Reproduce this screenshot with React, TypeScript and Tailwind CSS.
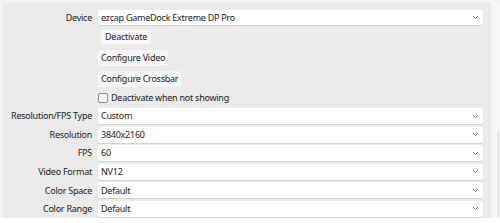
import React from 'react';

const font = { fontFamily: '"Noto Sans", "Open Sans", sans-serif' };

function Chevron() {
  return (
    <svg width="7" height="5" viewBox="0 0 7 5" className="shrink-0">
      <polyline points="1,1 3.5,3.5 6,1" fill="none" stroke="#7a7a7a" strokeWidth="1" />
    </svg>
  );
}

function Select({ value, h = 'h-[16px]' }: { value: string; h?: string }) {
  return (
    <div
      className={`${h} flex items-center justify-between bg-white rounded-[2px] pl-[3px] pr-[4px] shadow-[0_1px_0_#d2d2d2]`}
    >
      <span>{value}</span>
      <Chevron />
    </div>
  );
}

const selects: [string, string][] = [
  ['Resolution/FPS Type', 'Custom'],
  ['Resolution', '3840x2160'],
  ['FPS', '60'],
  ['Video Format', 'NV12'],
  ['Color Space', 'Default'],
  ['Color Range', 'Default'],
];

export default function App() {
  return (
    <div
      className="w-[500px] h-[223px] bg-[#f4f4f4] overflow-hidden text-[9px] tracking-[-0.25px] text-[#1b1b1b]"
      style={font}
    >
      <div className="flex h-[218px] pt-[3px]">
        <div className="ml-[3px] w-[486px] bg-[#ebebeb] pr-[6px] pt-[7px]">
          {/* Device */}
          <div className="grid grid-cols-[89px_1fr] gap-x-[6px] items-center h-[15px]">
            <span className="text-right">Device</span>
            <Select value="ezcap GameDock Extreme DP Pro" h="h-[15px]" />
          </div>

          {/* Buttons */}
          <div className="ml-[95px] flex flex-col items-start">
            <div className="mt-[5px] ml-[3px] h-[14px] px-[4px] flex items-center bg-[#f9f9f9] rounded-[2px]">
              Deactivate
            </div>
            <div className="mt-[6px] h-[16px] px-[3px] flex items-center bg-[#f6f6f6] rounded-[2px]">
              Configure Video
            </div>
            <div className="mt-[5px] h-[16px] px-[3px] flex items-center bg-[#f6f6f6] rounded-[2px]">
              Configure Crossbar
            </div>
            <label className="mt-[3px] h-[16px] flex items-center gap-[3px]">
              <span className="w-[10px] h-[10px] border border-[#8a8a8a] rounded-[2px] bg-[#f7f7f7]" />
              <span>Deactivate when not showing</span>
            </label>
          </div>

          {/* Selects */}
          <div className="mt-[2px] flex flex-col gap-[2.6px]">
            {selects.map(([label, value]) => (
              <div key={label} className="grid grid-cols-[89px_1fr] gap-x-[6px] items-center">
                <span className="text-right">{label}</span>
                <Select value={value} />
              </div>
            ))}
          </div>
        </div>
        <div className="w-[3px] bg-[#f0f0f0] border-l border-[#e2e2e2]" />
        <div className="flex-1 bg-[#f7f7f7] pt-[127px]">
          <div className="h-[88px] w-px bg-[#d8d8d8] ml-auto mr-[1px]" />
        </div>
      </div>
      <div className="h-[5px] bg-white" />
    </div>
  );
}
